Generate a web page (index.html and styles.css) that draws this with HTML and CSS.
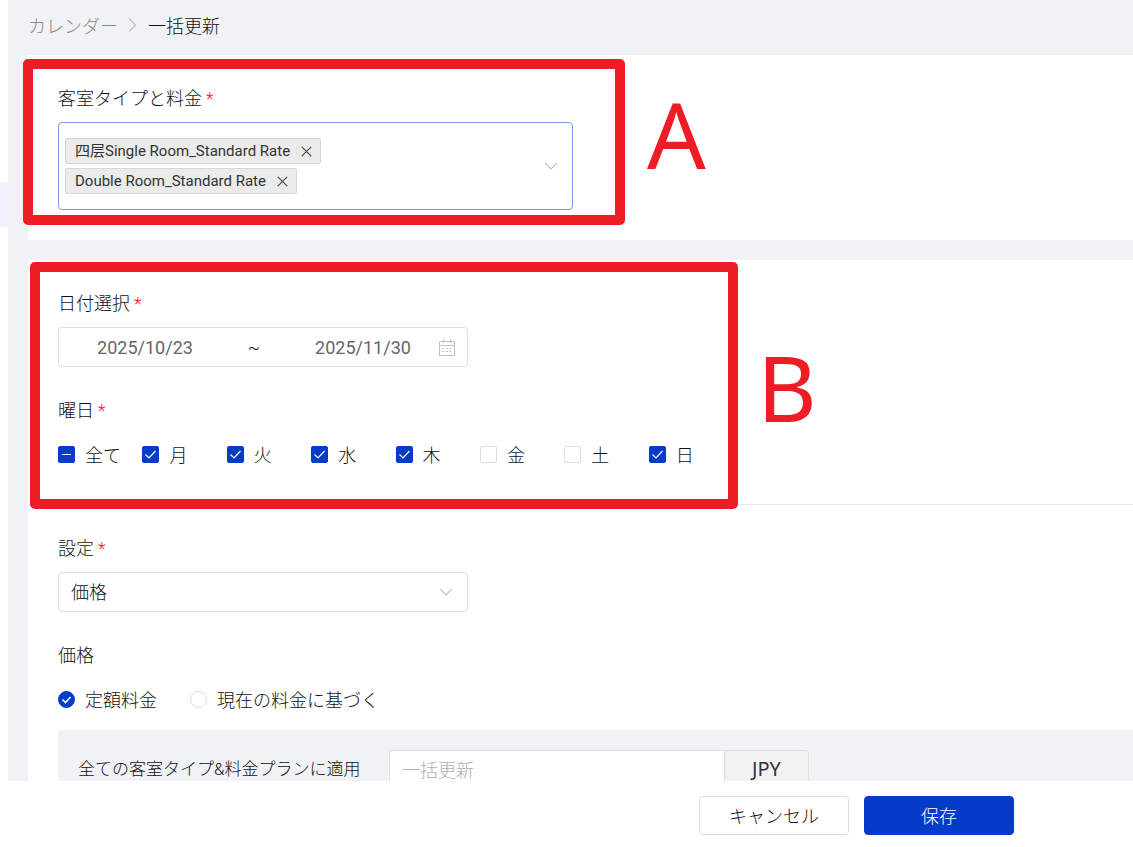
FILE: index.html
```html
<!DOCTYPE html>
<html lang="ja">
<head>
    <meta charset="UTF-8">
    <meta name="viewport" content="width=device-width, initial-scale=1.0">
    <title>一括更新</title>
    <link rel="stylesheet" href="styles.css">
</head>
<body>
    <div class="app">
        <div class="workspace">
            <aside class="sidebar">
                <div class="sidebar-active"></div>
            </aside>

            <main class="content">
                <nav class="breadcrumb">
                    <a href="#">カレンダー</a>
                    <svg width="10" height="16" viewBox="0 0 10 16" fill="none" stroke="#c0c0c4" stroke-width="1.2"><path d="M1 1.5 L7.5 8 L1 14.5"/></svg>
                    <span>一括更新</span>
                </nav>

                <section class="card">
                    <div class="section">
                        <div class="label" id="room-label">客室タイプと料金<span class="required">*</span></div>
                        <div class="tag-select" role="group" aria-labelledby="room-label">
                            <div class="tags">
                                <span class="tag">四层Single Room_Standard Rate
                                    <button type="button" class="tag-close" aria-label="削除"><svg width="11" height="11" viewBox="0 0 11 11" stroke="#444" stroke-width="1.1"><path d="M.8 .8 L10.2 10.2 M10.2 .8 L.8 10.2"/></svg></button>
                                </span>
                                <span class="tag">Double Room_Standard Rate
                                    <button type="button" class="tag-close" aria-label="削除"><svg width="11" height="11" viewBox="0 0 11 11" stroke="#444" stroke-width="1.1"><path d="M.8 .8 L10.2 10.2 M10.2 .8 L.8 10.2"/></svg></button>
                                </span>
                            </div>
                            <svg width="14" height="8" viewBox="0 0 14 8" fill="none" stroke="#c0c0c0" stroke-width="1.1"><path d="M1 1 L7 7 L13 1"/></svg>
                        </div>
                    </div>
                </section>

                <section class="card">
                    <div class="section">
                        <label class="label" for="date-from">日付選択<span class="required">*</span></label>
                        <div class="date-range">
                            <input type="text" id="date-from" value="2025/10/23">
                            <span>~</span>
                            <input type="text" id="date-to" value="2025/11/30" aria-label="終了日">
                            <svg width="16" height="17" viewBox="0 0 16 17" fill="none" stroke="#c0c0c0">
                                <path d="M.5 2.5 H15.5 V16.5 H.5 Z M.5 6.5 H15.5 M4.5 .5 V4 M11.5 .5 V4"/>
                                <path d="M3.5 9.5 H12.5 M3.5 12.5 H12.5" stroke-dasharray="2 1.5"/>
                            </svg>
                        </div>

                        <div class="label next" id="day-label">曜日<span class="required">*</span></div>
                        <div class="weekdays" role="group" aria-labelledby="day-label">
                            <label class="option"><input type="checkbox" class="partial">全て</label>
                            <label class="option"><input type="checkbox" checked>月</label>
                            <label class="option"><input type="checkbox" checked>火</label>
                            <label class="option"><input type="checkbox" checked>水</label>
                            <label class="option"><input type="checkbox" checked>木</label>
                            <label class="option"><input type="checkbox">金</label>
                            <label class="option"><input type="checkbox">土</label>
                            <label class="option"><input type="checkbox" checked>日</label>
                        </div>
                    </div>

                    <div class="section">
                        <label class="label" for="setting">設定<span class="required">*</span></label>
                        <select id="setting" class="select">
                            <option>価格</option>
                        </select>

                        <div class="label next" id="price-label">価格</div>
                        <div class="radios" role="radiogroup" aria-labelledby="price-label">
                            <label class="option"><input type="radio" name="price" checked>定額料金</label>
                            <label class="option"><input type="radio" name="price">現在の料金に基づく</label>
                        </div>

                        <div class="apply-all">
                            <label for="amount">全ての客室タイプ&amp;料金プランに適用</label>
                            <div class="amount">
                                <input type="text" id="amount" placeholder="一括更新">
                                <span class="currency">JPY</span>
                            </div>
                        </div>
                    </div>
                </section>
            </main>
        </div>

        <footer class="actions">
            <button type="button" class="btn">キャンセル</button>
            <button type="button" class="btn btn-primary">保存</button>
        </footer>

        <div class="mark-box mark-box-a"></div>
        <div class="mark-letter mark-letter-a">A</div>
        <div class="mark-box mark-box-b"></div>
        <div class="mark-letter mark-letter-b">B</div>
    </div>
</body>
</html>
```
FILE: styles.css
```css
* {
    box-sizing: border-box;
}

body {
    margin: 0;
    font-family: Roboto, 'Noto Sans CJK JP', sans-serif;
    font-size: 18px;
    font-weight: 300;
    color: #111;
    background: #fff;
}

input, select, button {
    font: inherit;
    color: inherit;
}

.app {
    position: relative;
    display: flex;
    flex-direction: column;
    height: 100vh;
    overflow: hidden;
}

.workspace {
    display: flex;
    flex: 1;
    min-height: 0;
    overflow: hidden;
}

.sidebar {
    flex: 0 0 8px;
    padding-top: 182px;
}

.sidebar-active {
    height: 45px;
    background: #eff2fc;
}

.content {
    flex: 1;
    padding-left: 20px;
    background: #f1f2f6;
}

/* Breadcrumb */
.breadcrumb {
    display: flex;
    align-items: center;
    height: 55px;
    padding-bottom: 6px;
}

.breadcrumb a {
    color: #888;
    text-decoration: none;
}

.breadcrumb svg {
    margin: 0 10px;
}

/* Cards */
.card {
    margin-bottom: 20px;
    background: #fff;
}

.section {
    padding: 30px 0 30px 30px;
}

.section + .section {
    border-top: 1px solid #e6e6e6;
}

.label {
    display: block;
    height: 28px;
    margin-bottom: 9px;
    line-height: 28px;
}

.label.next {
    margin-top: 30px;
}

.required {
    margin-left: 4px;
    color: #f5222d;
}

/* Room type select */
.tag-select {
    display: flex;
    align-items: center;
    justify-content: space-between;
    max-width: 515px;
    padding: 15px 14px 15px 6px;
    border: 1px solid #7f9be0;
    border-radius: 4px;
}

.tags {
    display: flex;
    flex-direction: column;
    align-items: flex-start;
    gap: 4px;
}

.tag {
    display: flex;
    align-items: center;
    gap: 11px;
    height: 26px;
    padding: 0 8px 0 9px;
    border: 1px solid #d6d6d6;
    border-radius: 2px;
    background: #ebebeb;
    color: #333;
    font-size: 15px;
    font-weight: 400;
    line-height: 18px;
}

.tag-close {
    display: flex;
    padding: 0;
    border: none;
    background: none;
    cursor: pointer;
}

/* Date range */
.date-range {
    display: flex;
    align-items: center;
    max-width: 410px;
    height: 40px;
    padding: 0 12px 0 14px;
    border: 1px solid #dedede;
    border-radius: 4px;
}

.date-range input {
    width: 144px;
    padding: 0;
    border: none;
    background: none;
    color: #666;
    font-weight: 400;
    text-align: center;
}

.date-range span {
    flex: 1;
    text-align: center;
}

.date-range svg {
    margin-left: 4px;
}

/* Checkboxes and radios */
.weekdays {
    display: grid;
    grid-template-columns: repeat(8, 1fr);
    max-width: 675px;
}

.radios {
    display: flex;
    gap: 33px;
}

.option {
    display: flex;
    align-items: center;
    gap: 10px;
    height: 40px;
    white-space: nowrap;
}

.option input {
    flex: none;
    appearance: none;
    width: 17px;
    height: 17px;
    margin: 0;
    border: 1px solid #dedede;
    border-radius: 2px;
    background: #fff center no-repeat;
}

.option input[type="radio"] {
    border-radius: 50%;
}

.option input:checked {
    border-color: #053bc9;
    background-color: #053bc9;
    background-image: url("data:image/svg+xml,%3Csvg xmlns='http://www.w3.org/2000/svg' width='13' height='11' fill='none' stroke='white' stroke-width='1.2'%3E%3Cpath d='M1.5 5.5 L5 9 L11.5 2'/%3E%3C/svg%3E");
}

.option input[type="radio"]:checked {
    background-image: url("data:image/svg+xml,%3Csvg xmlns='http://www.w3.org/2000/svg' width='11' height='9' fill='none' stroke='white' stroke-width='1.6'%3E%3Cpath d='M1.5 4.5 L4.5 7.5 L9.5 2'/%3E%3C/svg%3E");
}

.option .partial {
    border-color: #053bc9;
    background: linear-gradient(#fff, #fff) center / 9px 1px no-repeat #053bc9;
}

.select {
    display: block;
    appearance: none;
    width: 100%;
    max-width: 410px;
    height: 40px;
    padding: 0 12px;
    border: 1px solid #dedede;
    border-radius: 4px;
    background: #fff url("data:image/svg+xml,%3Csvg xmlns='http://www.w3.org/2000/svg' width='14' height='8' fill='none' stroke='%23c0c0c0' stroke-width='1.1'%3E%3Cpath d='M1 1 L7 7 L13 1'/%3E%3C/svg%3E") right 14px center no-repeat;
}

/* Apply to all plans */
.apply-all {
    display: flex;
    align-items: center;
    margin-top: 11px;
    padding: 20px;
    background: #f1f2f6;
}

.apply-all label {
    flex: 0 0 311px;
    font-size: 17px;
    line-height: 24px;
    padding-bottom: 2px;
}

.amount {
    display: flex;
    flex: 0 1 420px;
    height: 40px;
    border: 1px solid #dedede;
    border-radius: 4px;
    background: #fff;
    overflow: hidden;
}

.amount input {
    flex: 1;
    min-width: 0;
    padding: 0 12px;
    border: none;
    background: none;
}

.amount input::placeholder {
    color: #b0b0b0;
}

.currency {
    width: 84px;
    border-left: 1px solid #dedede;
    background: #f2f2f2;
    color: #333;
    font-family: 'Noto Sans', sans-serif;
    font-size: 20px;
    font-weight: 400;
    line-height: 36px;
    text-align: center;
}

/* Footer buttons */
.actions {
    display: flex;
    justify-content: flex-end;
    gap: 15px;
    padding: 15px 119px 12px 0;
    background: #fff;
}

.btn {
    width: 150px;
    height: 39px;
    padding: 0 0 2px;
    border: 1px solid #dedede;
    border-radius: 4px;
    background: #fff;
    cursor: pointer;
}

.btn-primary {
    border-color: #053bc9;
    background: #053bc9;
    color: #fff;
}

/* Annotations drawn over the page */
.mark-box {
    position: absolute;
    border: 10px solid #ee1c25;
    border-radius: 5px;
    pointer-events: none;
}

.mark-box-a {
    left: 23px;
    top: 59px;
    width: 602px;
    height: 166px;
}

.mark-box-b {
    left: 30px;
    top: 262px;
    width: 708px;
    height: 247px;
}

.mark-letter {
    position: absolute;
    color: #ee1c25;
    font-family: 'Noto Sans', sans-serif;
    font-size: 92px;
    font-weight: 400;
    line-height: 100px;
}

.mark-letter-a {
    left: 647px;
    top: 84px;
}

.mark-letter-b {
    left: 757px;
    top: 337px;
}
```
